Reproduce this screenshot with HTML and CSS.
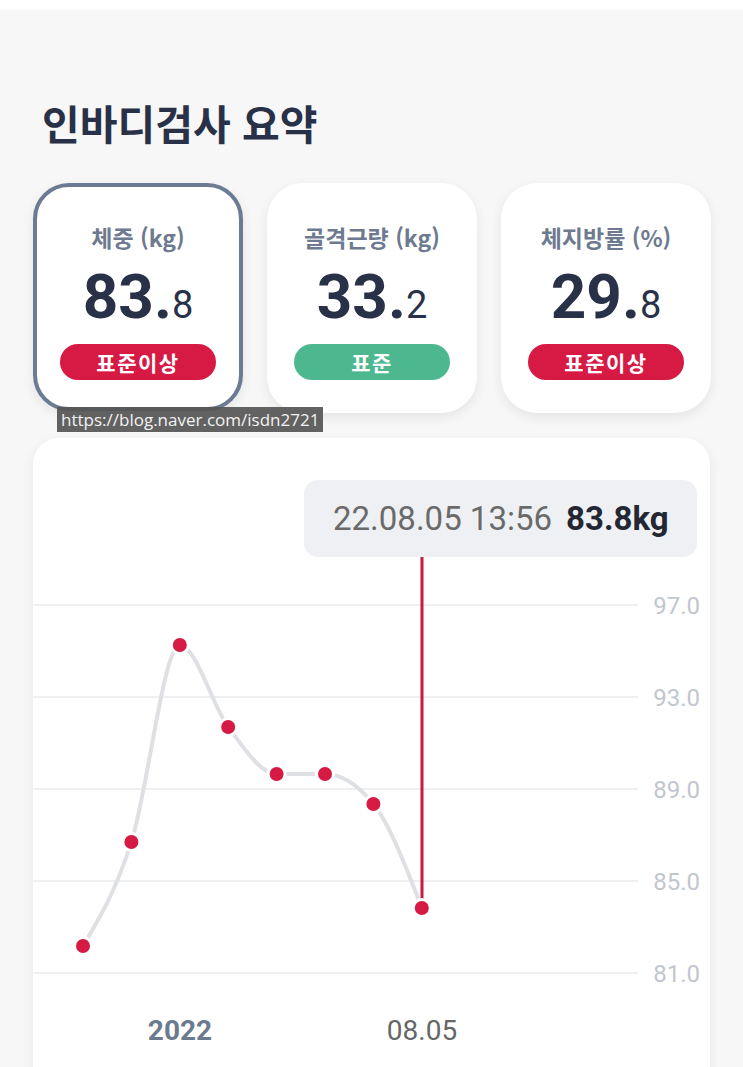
FILE: index.html
```html
<!DOCTYPE html>
<html lang="ko">
<head>
    <meta charset="UTF-8">
    <title>인바디검사 요약</title>
    <link rel="stylesheet" href="styles.css">
</head>
<body>

<div class="statusbar"></div>

<h1 class="title">인바디검사 요약</h1>

<!-- 요약 카드 -->
<section class="summary">
    <div class="card card-active">
        <div class="card-label">체중 (kg)</div>
        <div class="card-value"><span class="int">83.</span><span class="dec">8</span></div>
        <div class="badge badge-high">표준이상</div>
    </div>
    <div class="card">
        <div class="card-label">골격근량 (kg)</div>
        <div class="card-value"><span class="int">33.</span><span class="dec">2</span></div>
        <div class="badge badge-normal">표준</div>
    </div>
    <div class="card">
        <div class="card-label">체지방률 (%)</div>
        <div class="card-value"><span class="int">29.</span><span class="dec">8</span></div>
        <div class="badge badge-high">표준이상</div>
    </div>
    <span class="watermark">https://blog.naver.com/isdn2721</span>
</section>

<!-- 체중 그래프 -->
<section class="chart-card">
    <div class="tooltip"><span class="tip-date">22.08.05 13:56</span><span class="tip-value">83.8kg</span></div>
    <svg class="chart" width="677" height="640" viewBox="0 0 677 640">
        <g class="grid">
            <line x1="0" y1="167" x2="605" y2="167"/>
            <line x1="0" y1="259" x2="605" y2="259"/>
            <line x1="0" y1="351" x2="605" y2="351"/>
            <line x1="0" y1="443" x2="605" y2="443"/>
            <line x1="0" y1="535" x2="605" y2="535"/>
        </g>
        <g class="y-labels">
            <text x="667" y="176" text-anchor="end">97.0</text>
            <text x="667" y="268" text-anchor="end">93.0</text>
            <text x="667" y="360" text-anchor="end">89.0</text>
            <text x="667" y="452" text-anchor="end">85.0</text>
            <text x="667" y="544" text-anchor="end">81.0</text>
        </g>
        <line class="cursor" x1="389" y1="119" x2="389" y2="470"/>
        <path class="curve" d="M50,508 C66.1,481.1 82.3,454.2 98.4,404 C114.5,353.8 130.7,207 146.8,207 C162.9,207 179.1,267.5 195.2,289 C211.3,310.5 227.5,336 243.6,336 C259.7,336 275.9,336 292,336 C308.1,336 324.3,346 340.4,366 C356.5,386 372.7,428 388.8,470"/>
        <g class="dots">
            <circle cx="50" cy="508" r="7"/>
            <circle cx="98.4" cy="404" r="7"/>
            <circle cx="146.8" cy="207" r="7"/>
            <circle cx="195.2" cy="289" r="7"/>
            <circle cx="243.6" cy="336" r="7"/>
            <circle cx="292" cy="336" r="7"/>
            <circle cx="340.4" cy="366" r="7"/>
            <circle cx="388.8" cy="470" r="7"/>
        </g>
        <text class="x-year" x="147" y="602" text-anchor="middle">2022</text>
        <text class="x-date" x="389" y="602" text-anchor="middle">08.05</text>
    </svg>
</section>

</body>
</html>
```

FILE: styles.css
```css
/* 기본 */
body {
    margin: 0;
    background-color: #f7f7f8;
    font-family: "Noto Sans CJK KR", "Noto Sans", sans-serif;
    color: #283147;
    overflow: hidden;
}
.statusbar {
    height: 10px;
    background-color: #fff;
}
.title {
    margin: 88px 0 37px 42px;
    font-size: 41px;
    line-height: 48px;
    font-weight: 700;
    color: #283147;
}

/* 요약 카드 */
.summary {
    position: relative;
    display: grid;
    grid-template-columns: repeat(3, 210px);
    gap: 24px;
    padding: 0 33px;
}
.card {
    height: 230px;
    box-sizing: border-box;
    padding-top: 38px;
    display: flex;
    flex-direction: column;
    align-items: center;
    background-color: #fff;
    border-radius: 36px;
    box-shadow: 0 4px 12px rgba(0, 0, 0, 0.08);
}
.card-active {
    border: 4px solid #6b7b93;
    padding-top: 34px;
    height: 228px;
}
.card-label {
    height: 32px;
    font-size: 23px;
    line-height: 32px;
    font-weight: 700;
    color: #6d7a8f;
}
.card-value {
    margin-top: 10px;
    height: 68px;
    line-height: 68px;
    font-family: Roboto, "Liberation Sans", sans-serif;
    color: #283147;
}
.card-value .int {
    font-size: 62px;
    font-weight: 700;
}
.card-value .dec {
    font-size: 38px;
    font-weight: 400;
}
.badge {
    margin-top: 13px;
    width: 156px;
    height: 36px;
    line-height: 36px;
    border-radius: 18px;
    text-align: center;
    font-size: 21px;
    font-weight: 700;
    letter-spacing: 1.5px;
    color: #fff;
}
.badge-high {
    background-color: #d61a44;
}
.badge-normal {
    background-color: #4db890;
}
.watermark {
    position: absolute;
    left: 57px;
    top: 224px;
    height: 25px;
    line-height: 25px;
    padding: 0 4px;
    font-family: "Open Sans", sans-serif;
    font-size: 17px;
    color: #f2f2f2;
    background-color: rgba(85, 85, 85, 0.92);
}

/* 그래프 */
.chart-card {
    position: relative;
    margin: 25px 33px 0 33px;
    height: 660px;
    background-color: #fff;
    border-radius: 26px;
    box-shadow: 0 4px 12px rgba(0, 0, 0, 0.07);
}
.tooltip {
    position: absolute;
    left: 271px;
    top: 42px;
    width: 393px;
    height: 77px;
    box-sizing: border-box;
    padding-left: 29px;
    display: flex;
    align-items: center;
    background-color: #eff0f3;
    border-radius: 14px;
    font-family: Roboto, "Liberation Sans", sans-serif;
    font-size: 33px;
}
.tip-date {
    color: #6a6a6a;
}
.tip-value {
    margin-left: 14px;
    font-weight: 700;
    color: #222733;
}
.chart {
    display: block;
    font-family: Roboto, "Liberation Sans", sans-serif;
}
.grid line {
    stroke: #eeeff1;
    stroke-width: 2;
}
.y-labels text {
    font-size: 24px;
    fill: #c2c6ce;
}
.cursor {
    stroke: #c8193f;
    stroke-width: 3;
}
.curve {
    fill: none;
    stroke: #dfe0e3;
    stroke-width: 4;
}
.dots circle {
    fill: #d51a43;
    stroke: #fff;
    stroke-width: 6;
    paint-order: stroke;
}
.x-year {
    font-size: 28px;
    font-weight: 700;
    fill: #6c7a8f;
}
.x-date {
    font-size: 28px;
    fill: #666;
}
```
